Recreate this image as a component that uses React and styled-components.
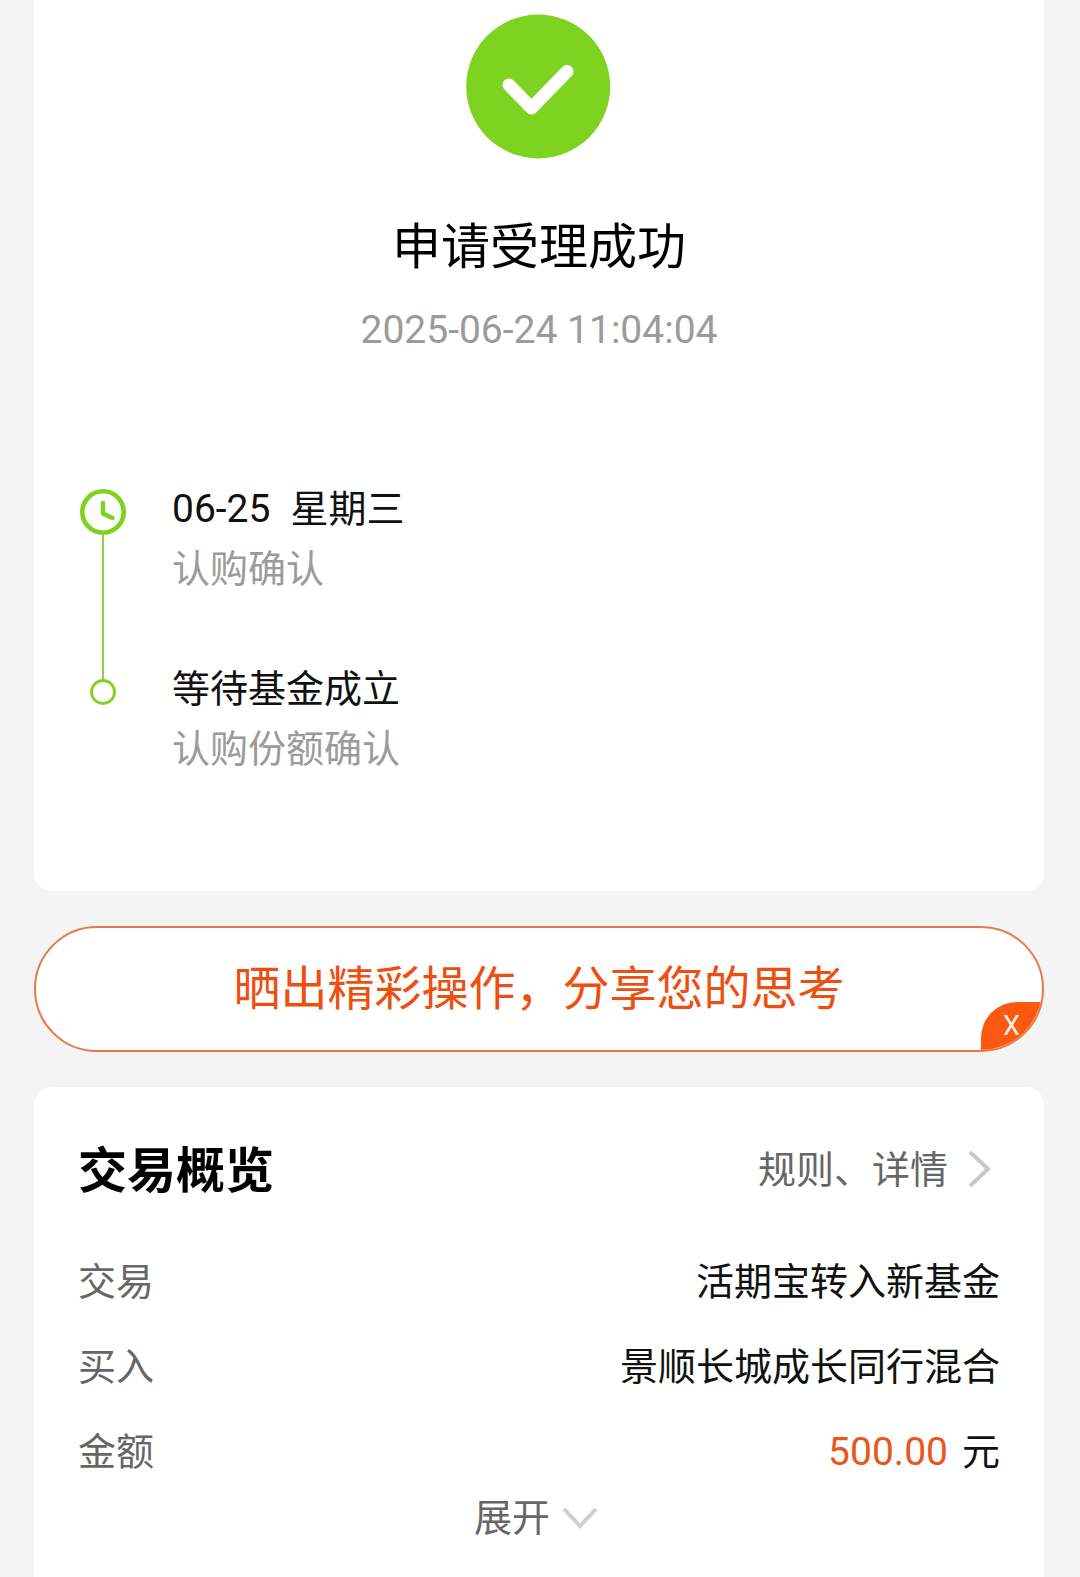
import React from 'react';
import styled, { createGlobalStyle } from 'styled-components';

const GlobalStyle = createGlobalStyle`
  * {
    box-sizing: border-box;
    margin: 0;
    padding: 0;
  }

  body {
    background-color: #f4f4f4;
    font-family: Roboto, "Noto Sans CJK SC", sans-serif;
  }

  button {
    border: none;
    background: none;
    font-family: inherit;
    cursor: pointer;
  }
`;

const Page = styled.main`
  min-height: 100vh;
  padding: 0 36px 0 34px;
  display: flex;
  flex-direction: column;
  gap: 35px;
`;

const ResultCard = styled.section`
  padding: 14px 44px 112px;
  border-radius: 0 0 18px 18px;
  background-color: white;
`;

const ResultHead = styled.header`
  display: flex;
  flex-direction: column;
  align-items: center;
  margin-bottom: 119px;
`;

const Title = styled.h1`
  margin-top: 53px;
  font-size: 49px;
  font-weight: 400;
  line-height: 72px;
  color: black;
`;

const Time = styled.time`
  margin-top: 16px;
  font-size: 39px;
  line-height: 60px;
  color: #9b9b9b;
`;

const Timeline = styled.ol`
  list-style: none;
`;

const Step = styled.li`
  display: flex;
  gap: 44px;
`;

const Rail = styled.div`
  width: 50px;
  padding-top: ${(props) => (props.$last ? "0" : "10px")};
  display: flex;
  flex-direction: column;
  align-items: center;

  svg {
    display: block;
    flex-shrink: 0;
  }
`;

const RailLine = styled.span`
  flex: 1;
  width: 2px;
  background-color: #8fcf4d;
`;

const RailStub = styled.span`
  height: 20px;
  width: 2px;
  background-color: #8fcf4d;
`;

const StepBody = styled.div`
  padding-bottom: ${(props) => (props.$last ? "0" : "60px")};
`;

const StepTitle = styled.h2`
  display: flex;
  gap: 20px;
  font-size: 38px;
  font-weight: 400;
  line-height: 60px;
  color: #111;
`;

const StepDate = styled.span`
  font-size: 39px;
`;

const StepText = styled.p`
  font-size: 38px;
  line-height: 60px;
  color: #9b9b9b;
`;

const SharePill = styled.div`
  position: relative;
  display: flex;
  border: 2px solid #e87a4a;
  border-radius: 63px;
  background-color: white;
  overflow: hidden;
`;

const ShareButton = styled.button`
  flex: 1;
  padding: 26px 0;
  font-size: 47px;
  line-height: 70px;
  color: #ec4f10;
`;

const CloseButton = styled.button`
  position: absolute;
  right: 0;
  bottom: 0;
  width: 61px;
  height: 48px;
  border-top-left-radius: 36px;
  background-color: #fc5810;
  font-size: 27px;
  line-height: 48px;
  color: #fff3e8;
`;

const OverviewCard = styled.section`
  flex: 1;
  padding: 49px 44px 24px;
  border-radius: 18px 18px 0 0;
  background-color: white;
`;

const OverviewHead = styled.header`
  display: flex;
  align-items: flex-start;
  justify-content: space-between;
  margin-bottom: 32px;
`;

const OverviewTitle = styled.h2`
  font-size: 49px;
  font-weight: 700;
  line-height: 72px;
  color: black;
`;

const RulesLink = styled.a`
  display: flex;
  align-items: center;
  gap: 18px;
  padding-right: 8px;
  font-size: 38px;
  line-height: 68px;
  color: #666;
  text-decoration: none;
`;

const Rows = styled.dl`
  display: flex;
  flex-direction: column;
`;

const Row = styled.div`
  display: flex;
  justify-content: space-between;
  font-size: 38px;
  line-height: 85px;
`;

const Label = styled.dt`
  color: #666;
`;

const Value = styled.dd`
  display: flex;
  gap: 14px;
  color: #111;
`;

const Amount = styled.span`
  font-size: 39px;
  color: #e8561c;
`;

const ExpandButton = styled.button`
  display: flex;
  align-items: center;
  gap: 12px;
  margin: 0 auto;
  font-size: 38px;
  line-height: 46px;
  color: #666;
`;

const steps = [
  { date: "06-25", title: "星期三", text: "认购确认" },
  { title: "等待基金成立", text: "认购份额确认" },
];

const rows = [
  { label: "交易", value: "活期宝转入新基金" },
  { label: "买入", value: "景顺长城成长同行混合" },
  { label: "金额", amount: "500.00", value: "元" },
];

const SuccessIcon = () => (
  <svg width="146" height="145" viewBox="0 0 146 145" aria-hidden="true">
    <circle cx="72.200" cy="72.500" r="72" fill="#7ed321" />
    <path d="M43 71 L65.500 94 L101 57.500" fill="none" stroke="white" strokeWidth="13" strokeLinecap="round" strokeLinejoin="round" />
  </svg>
);

const ClockIcon = () => (
  <svg width="46" height="46" viewBox="1 1 46 46" fill="none" stroke="#7ed321" aria-hidden="true">
    <circle cx="24" cy="24" r="20.700" strokeWidth="4.600" />
    <path d="M24 15 V25.500 L33.500 30" strokeWidth="4.400" strokeLinecap="round" strokeLinejoin="round" />
  </svg>
);

const DotIcon = () => (
  <svg width="26" height="26" viewBox="0 0 26 26" fill="none" aria-hidden="true">
    <circle cx="13" cy="13" r="11.500" stroke="#7ed321" strokeWidth="2.800" />
  </svg>
);

const ChevronRight = () => (
  <svg width="26" height="40" viewBox="0 0 26 40" fill="none" aria-hidden="true">
    <path d="M4 2 L22 19 L4 36" stroke="#c8c8c8" strokeWidth="4" />
  </svg>
);

const ChevronDown = () => (
  <svg width="42" height="24" viewBox="0 0 42 24" fill="none" aria-hidden="true">
    <path d="M2 3 L18 20 L34 3" stroke="#cfcfcf" strokeWidth="4" />
  </svg>
);

const App = () => {
  return (
    <>
      <GlobalStyle />
      <Page>
        <ResultCard>
          <ResultHead>
            <SuccessIcon />
            <Title>申请受理成功</Title>
            <Time dateTime="2025-06-24T11:04:04">2025-06-24 11:04:04</Time>
          </ResultHead>
          <Timeline>
            {steps.map((step, i) => {
              const last = i === steps.length - 1;
              return (
                <Step key={step.title}>
                  <Rail $last={last}>
                    {last ? <RailStub /> : <ClockIcon />}
                    {last ? <DotIcon /> : <RailLine />}
                  </Rail>
                  <StepBody $last={last}>
                    <StepTitle>
                      {step.date && <StepDate>{step.date}</StepDate>}
                      <span>{step.title}</span>
                    </StepTitle>
                    <StepText>{step.text}</StepText>
                  </StepBody>
                </Step>
              );
            })}
          </Timeline>
        </ResultCard>

        <SharePill>
          <ShareButton type="button">晒出精彩操作，分享您的思考</ShareButton>
          <CloseButton type="button">X</CloseButton>
        </SharePill>

        <OverviewCard>
          <OverviewHead>
            <OverviewTitle>交易概览</OverviewTitle>
            <RulesLink href="#rules">
              规则、详情
              <ChevronRight />
            </RulesLink>
          </OverviewHead>
          <Rows>
            {rows.map((row) => (
              <Row key={row.label}>
                <Label>{row.label}</Label>
                <Value>
                  {row.amount && <Amount>{row.amount}</Amount>}
                  <span>{row.value}</span>
                </Value>
              </Row>
            ))}
          </Rows>
          <ExpandButton type="button">
            展开
            <ChevronDown />
          </ExpandButton>
        </OverviewCard>
      </Page>
    </>
  );
};

export default App;
